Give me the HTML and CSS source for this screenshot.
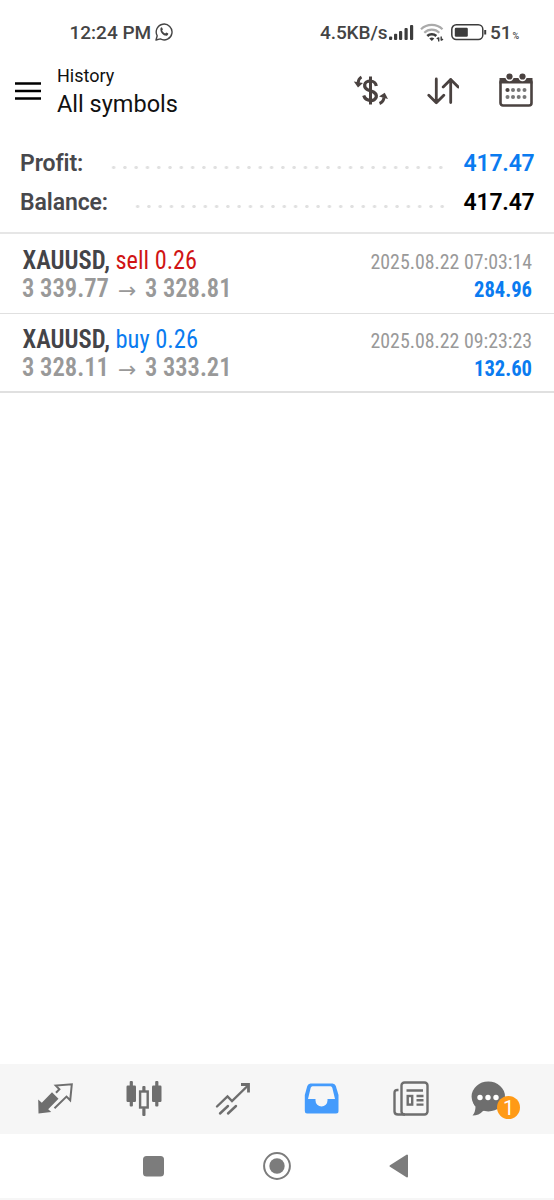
FILE: index.html
```html
<!DOCTYPE html>
<html lang="en">
<head>
<meta charset="utf-8">
<title>History</title>
<link rel="stylesheet" href="styles.css">
</head>
<body>
<div class="screen">
  <div class="status">
    <span class="clock">12:24 PM</span>
    <svg class="whatsapp" width="18" height="18" viewBox="0 0 18 18"><path d="M1 17l1.200-4.200A7.900 7.900 0 1 1 5.300 15.900z" fill="none" stroke="#444" stroke-width="1.400" stroke-linejoin="round"/><path d="M5.600 5c.7-.9 1.300-.9 1.700 0l.6 1.400-.8 1.200c.7 1.400 1.700 2.300 3.100 2.900l1.100-1.100 2 1c-.1 1.900-1.600 2.700-3.300 2.200C7.400 11.800 4.600 8.600 5.600 5z" fill="#444"/></svg>
    <span class="speed">4.5KB/s</span>
    <svg class="signal" width="26" height="17" viewBox="0 0 26 17" fill="#3c3c3c"><rect x="1" y="12.500" width="3.200" height="3.500" rx="1"/><rect x="6" y="9.800" width="3.200" height="6.200" rx="1"/><rect x="11" y="7" width="3.200" height="9" rx="1"/><rect x="16.500" y="4" width="3.200" height="12" rx="1"/><rect x="22" y="1" width="3.200" height="15" rx="1"/></svg>
    <svg class="wifi" width="24" height="19" viewBox="0 0 24 19" fill="none" stroke-width="2.200"><path d="M1 6.300a15.500 15.500 0 0 1 21.500 0" stroke="#aaa"/><path d="M4.300 9.700a10.800 10.800 0 0 1 15 0" stroke="#aaa"/><path d="M7.300 13a6.500 6.500 0 0 1 9 0" stroke="#3c3c3c" stroke-width="2.600"/><path d="M9.300 15.400q2.500-2 5 0L11.800 18z" fill="#3c3c3c"/><path d="M18.700 14.500v4M21.200 13.500v4M16.800 16l1.900-1.500M23 16l-1.800 1.500" stroke="#3c3c3c" stroke-width="1.400"/></svg>
    <svg class="battery" width="36" height="17" viewBox="0 0 36 17"><rect x=".8" y=".8" width="31" height="14.800" rx="4.500" fill="none" stroke="#3c3c3c" stroke-width="1.500"/><rect x="3.800" y="3.700" width="13" height="9" rx="1.200" fill="#3c3c3c"/><path d="M34.200 6v4.500" stroke="#3c3c3c" stroke-width="2"/></svg>
    <span class="level">51<small>%</small></span>
  </div>

  <header class="toolbar">
    <svg class="menu" width="26" height="18" viewBox="0 0 26 18"><path d="M0 1.500h26M0 9h26M0 16.500h26" stroke="#000" stroke-width="2.600"/></svg>
    <div class="titles">
      <div class="title">History</div>
      <div class="subtitle">All symbols</div>
    </div>
    <svg class="currency" width="36" height="32" viewBox="0 0 36 32" fill="none" stroke="#4a4240"><path d="M17.500 1.500v28" stroke-width="3"/><path d="M23.300 11q-.8-4.500-5.600-5-5.200 0-6 3.700-.4 3.500 3 5l5.800 2.300q3.500 2 2.700 5.300-1.500 3.300-5.500 3.300-5.500-.3-7-5" stroke-width="3.200"/><path d="M8.500 2Q5.500 3.500 5 8" stroke-width="3"/><path d="M.8 6.500l9.200 1.500-5 4.500z" fill="#4a4240" stroke="none"/><path d="M26.500 28.500q4-1.500 4.500-6" stroke-width="3"/><path d="M26 21.500l5.700-3.700 3.300 6.200z" fill="#4a4240" stroke="none"/></svg>
    <svg class="sort" width="32" height="28" viewBox="0 0 32 28" fill="none" stroke="#4a4240" stroke-width="2.800" stroke-linecap="round" stroke-linejoin="round"><path d="M9.300 2v23.500M1.800 18.200l7.500 7.500 7.500-7.500M23.700 25.500V2.500M16.200 10l7.500-7.500 7.500 7.500"/></svg>
    <svg class="calendar" width="34" height="34" viewBox="0 0 34 34"><rect x="1.500" y="7" width="31" height="25.500" rx="2.500" fill="none" stroke="#4a4240" stroke-width="2.600"/><path d="M.5 5h33v5.500H.5z" fill="#4a4240"/><circle cx="10.500" cy="4" r="4.200" fill="#fff"/><circle cx="23.500" cy="4" r="4.200" fill="#fff"/><circle cx="10.500" cy="3.500" r="3.100" fill="#4a4240"/><circle cx="23.500" cy="3.500" r="3.100" fill="#4a4240"/><g fill="#777"><circle cx="8.500" cy="17" r="2.100" fill="#4a4240"/><circle cx="14" cy="17" r="2"/><circle cx="19.700" cy="17" r="2"/><circle cx="25.500" cy="17" r="2"/><circle cx="8.500" cy="24" r="2"/><circle cx="14" cy="24" r="2"/><circle cx="19.700" cy="24" r="2"/><circle cx="25.500" cy="24" r="2"/></g></svg>
  </header>

  <section class="summary">
    <div class="total"><span class="label">Profit:</span><i class="dots dots-profit"></i><span class="amount blue">417.47</span></div>
    <div class="total"><span class="label">Balance:</span><i class="dots dots-balance"></i><span class="amount">417.47</span></div>
  </section>

  <section class="deals">
    <div class="deal">
      <svg width="554" height="79" viewBox="0 0 554 79">
        <text class="symbol" x="22.500" y="35" textLength="87.500" lengthAdjust="spacingAndGlyphs">XAUUSD,</text>
        <text class="side red" x="115.500" y="35" textLength="81.500" lengthAdjust="spacingAndGlyphs">sell 0.26</text>
        <text class="price" x="22" y="63" textLength="87" lengthAdjust="spacingAndGlyphs">3 339.77</text>
        <text class="arrow" x="118" y="64">→</text>
        <text class="price" x="145" y="63" textLength="86.500" lengthAdjust="spacingAndGlyphs">3 328.81</text>
        <text class="date" x="370.500" y="35" textLength="161.500" lengthAdjust="spacingAndGlyphs">2025.08.22 07:03:14</text>
        <text class="result" x="474" y="63" textLength="58" lengthAdjust="spacingAndGlyphs">284.96</text>
      </svg>
    </div>
    <div class="deal">
      <svg width="554" height="77" viewBox="0 0 554 77">
        <text class="symbol" x="22.500" y="34" textLength="87.500" lengthAdjust="spacingAndGlyphs">XAUUSD,</text>
        <text class="side sky" x="115.500" y="34" textLength="82.500" lengthAdjust="spacingAndGlyphs">buy 0.26</text>
        <text class="price" x="22" y="62" textLength="87" lengthAdjust="spacingAndGlyphs">3 328.11</text>
        <text class="arrow" x="118" y="63">→</text>
        <text class="price" x="145" y="62" textLength="86.500" lengthAdjust="spacingAndGlyphs">3 333.21</text>
        <text class="date" x="370.500" y="34" textLength="161.500" lengthAdjust="spacingAndGlyphs">2025.08.22 09:23:23</text>
        <text class="result" x="474" y="62" textLength="58" lengthAdjust="spacingAndGlyphs">132.60</text>
      </svg>
    </div>
  </section>

  <nav class="tabs">
    <span class="tab"><svg width="36" height="32" viewBox="0 0 36 32"><path d="M1.500 30.500L1.200 16.500l3.600 3.300L15 9.300l6.500 6.500L11.200 26.300l3 2.700z" fill="#6e6e6e"/><path d="M19 9.800l3.400-3.600-3.600-3.600 16-1.300-1.600 16-3.700-3.700L17.500 25.300" fill="none" stroke="#6e6e6e" stroke-width="2"/></svg></span>
    <span class="tab"><svg width="36" height="36" viewBox="0 0 36 36" fill="#6e6e6e"><rect x=".5" y="4.500" width="9.500" height="16.500" rx="1.200"/><rect x="3.700" width="3.200" height="25.500" rx="1"/><rect x="29.200" width="3.200" height="25.500" rx="1"/><rect x="16.300" y="5" width="3.200" height="6" rx="1"/><rect x="16.300" y="27" width="3.200" height="8" rx="1"/><rect x="26" y="4.500" width="9.500" height="16.500" rx="1.200"/><rect x="14.100" y="10.500" width="7.600" height="16" fill="none" stroke="#6e6e6e" stroke-width="2.400"/></svg></span>
    <span class="tab"><svg width="36" height="34" viewBox="0 0 36 34" fill="none" stroke="#6e6e6e" stroke-width="2.400"><path d="M2 24.500L12.500 14.500l4.500 4.500L33 3.500" stroke-linecap="round"/><path d="M26 2.500h7.500v8" stroke-width="2.800"/><path d="M5 31.500l8-7.500M13 31.500l8-7.500" stroke-linecap="round"/></svg></span>
    <span class="tab"><svg width="36" height="32" viewBox="0 0 36 32"><path d="M6.500.5h22q2.500 0 3.300 2.500l2.700 9V28q0 2.500-2.500 2.500H3Q.8 30.500.8 28V12l2.500-9Q4.200.5 6.500.5z" fill="#449bfc"/><path d="M8.500 3.200h18q1.300 0 1.800 1.500l2.700 11.300h-7.500v1.500a6 6 0 0 1-12 0v-1.500H4L6.700 4.700q.5-1.500 1.800-1.500z" fill="#f6f6f6"/></svg></span>
    <span class="tab"><svg width="38" height="36" viewBox="0 0 38 36" fill="none" stroke="#6e6e6e" stroke-width="2.400"><rect x="9.500" y="1.500" width="26" height="32" rx="3"/><path d="M6.500 9H5.500Q2.500 9 2.500 12v18.500q0 3 3.500 3h7"/><path d="M14.500 9.500h16.500M24.500 15h7M24.500 19.300h7M24.500 23.600h7"/><rect x="15.700" y="15" width="4.500" height="8.600"/></svg></span>
    <span class="tab chat"><svg width="36" height="36" viewBox="0 0 36 36"><path d="M1 15Q2 24 4.500 25.500 4.500 31 1.500 34.500 8 34.500 12 30l6-3z" fill="#6e6e6e"/><ellipse cx="17.300" cy="15.500" rx="16.700" ry="15" fill="#6e6e6e"/><g fill="#fff"><circle cx="9" cy="16.500" r="2.700"/><circle cx="17" cy="16.500" r="2.700"/><circle cx="25" cy="16.500" r="2.700"/></g></svg><b class="badge">1</b></span>
  </nav>

  <div class="system">
    <svg width="21" height="21" viewBox="0 0 21 21"><rect width="21" height="20.500" rx="3.500" fill="#7c7c7c"/></svg>
    <svg class="home" width="28" height="28" viewBox="0 0 28 28"><circle cx="14" cy="14" r="12.900" fill="none" stroke="#7c7c7c" stroke-width="2"/><circle cx="14" cy="14" r="7.700" fill="#7c7c7c"/></svg>
    <svg class="back" width="20" height="24" viewBox="0 0 20 24"><path d="M1.500 12L18 1.500v21z" fill="#7c7c7c" stroke="#7c7c7c" stroke-width="2" stroke-linejoin="round"/></svg>
  </div>
</div>
</body>
</html>
```
FILE: styles.css
```css
* { box-sizing: border-box; }
body { margin: 0; background: #fff; font-family: Roboto, "Liberation Sans", sans-serif; }
svg { display: block; flex: none; }
.screen { width: 554px; height: 1200px; display: flex; flex-direction: column; background: #fff; }

.status { height: 65px; padding-left: 69.500px; display: flex; align-items: center; color: #444; font-size: 19px; font-weight: 470; white-space: nowrap; }
.clock { width: 83px; }
.whatsapp { margin: -2px 0 0 2.500px; }
.speed { margin-left: 147px; width: 69px; letter-spacing: -0.1px; }
.signal { margin-left: -1px; }
.wifi { margin-left: 6px; }
.battery { margin-left: 7px; }
.level { margin-left: 3px; }
.level small { font-size: 9px; font-weight: 500; margin-left: 1px; }

.toolbar { height: 72px; padding: 0 20px 0 15px; display: flex; align-items: flex-start; color: #111; }
.menu { margin-top: 17px; }
.titles { margin-left: 16px; width: 296px; }
.title { font-size: 18px; line-height: 22px; }
.subtitle { font-size: 23.500px; line-height: 34px; }
.currency { margin-top: 10px; }
.sort { margin: 12px 0 0 38px; }
.calendar { margin: 8px 0 0 40px; }

.summary { height: 97px; padding: 6px 20px 0; border-bottom: 2px solid #e6e6e6; }
.total { height: 39px; display: flex; align-items: center; font-size: 23px; font-weight: 600; color: #48484c; }
.label, .amount { padding-top: 1px; }
.label { letter-spacing: -0.1px; }
.dots { flex: 1; height: 5px; background: radial-gradient(circle at center, #e0e0e0 1.300px, transparent 2px) 0 0 / 11.290px 5px repeat-x; }
.dots-profit { margin: 10px 16px 0 24.500px; }
.dots-balance { margin: 10px 15px 0 24.500px; }
.amount { color: #000; width: 70.500px; letter-spacing: -0.200px; text-align: right; }
.amount.blue { color: #0a7bf0; }

.deal { border-bottom: 1.500px solid #e0e0e0; font-family: "Roboto Condensed", Roboto, "Liberation Sans", sans-serif; font-stretch: 75%; }
.deal:last-child { border-bottom-width: 2px; }
.symbol { font-size: 26px; font-weight: 600; fill: #444448; }
.side { font-size: 26px; }
.red { fill: #d01414; }
.sky { fill: #0a7bf0; }
.price { font-size: 25.500px; font-weight: 600; fill: #999; }
.arrow { font: 22px "DejaVu Sans", sans-serif; fill: #999; }
.date { font-size: 21px; fill: #999; }
.result { font-size: 21.500px; font-weight: 700; fill: #0a7bf0; }

.tabs { margin-top: auto; height: 70px; padding: 0 10px 0 11px; background: #f6f6f6; display: grid; grid-template-columns: repeat(6, 1fr); }
.tab { display: flex; align-items: center; justify-content: center; }
.chat { position: relative; justify-content: flex-start; padding-left: 16px; }
.badge { position: absolute; left: 42px; top: 32px; width: 23px; height: 23px; border-radius: 50%; background: #ff9a16; color: #fff; font-size: 20px; font-weight: 400; line-height: 24px; text-align: center; }

.system { height: 66px; padding: 0 0 0 143px; display: flex; align-items: center; border-bottom: 2px solid #f6f6f6; }
.home { margin-left: 99px; }
.back { margin-left: 98px; }
```
